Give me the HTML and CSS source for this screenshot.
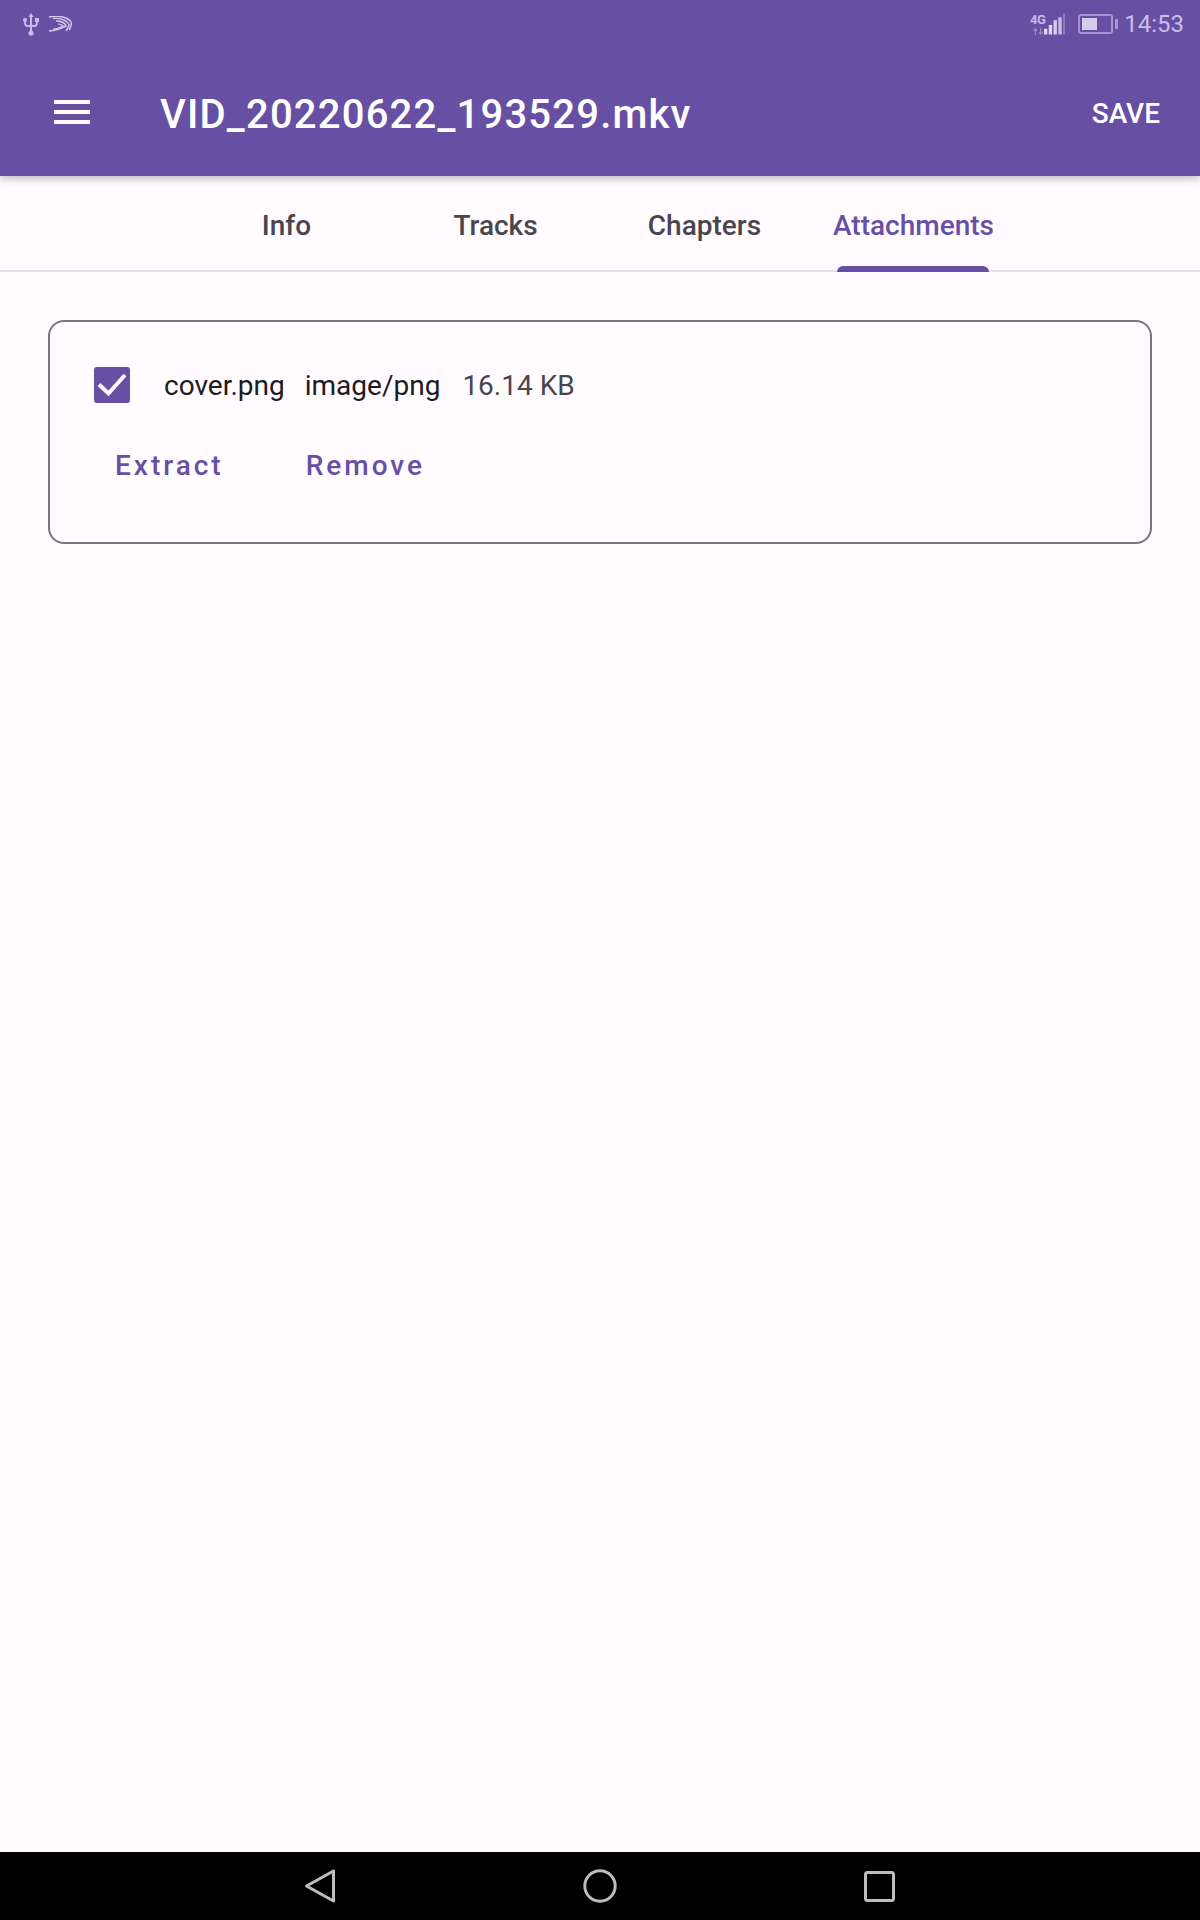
FILE: index.html
```html
<!DOCTYPE html>
<html lang="en">
<head>
  <meta charset="UTF-8">
  <title>VID_20220622_193529.mkv</title>
  <link rel="stylesheet" href="styles.css">
</head>
<body>
  <div class="screen">
    <header class="appbar">
      <div class="statusbar">
        <div class="status-left">
          <svg class="icon-usb" width="16" height="24" viewBox="0 0 16 24">
            <path d="M8 1 L10.5 5 H9 V20 H7 V5 H5.5 Z" fill="#c9bce8"/>
            <circle cx="8" cy="21" r="2.6" fill="#c9bce8"/>
            <path d="M2 8 V11 Q2 14 5 14 H11 Q14 14 14 11 V8" fill="none" stroke="#c9bce8" stroke-width="1.8"/>
            <circle cx="2" cy="8" r="2" fill="#c9bce8"/>
            <rect x="12" y="6" width="4" height="4" fill="#c9bce8"/>
          </svg>
          <svg class="icon-swift" width="24" height="16" viewBox="0 0 24 16">
            <path d="M1 1 C10 -1 21 1 23.5 7 C23.5 10 22.5 12 21 14" fill="none" stroke="#d6ccec" stroke-width="1.4"/>
            <path d="M5 2.5 C12 2 19 4 21 9 C20.5 11 19.5 13 18 15" fill="none" stroke="#d6ccec" stroke-width="1.4"/>
            <path d="M8 5 C13 5 17 7 18 10 C13 12.5 8 14.5 1 15" fill="none" stroke="#d6ccec" stroke-width="1.4"/>
            <path d="M10 8 C12 8 14 9 15 10 C11 12 8 13 5 13" fill="none" stroke="#d6ccec" stroke-width="1.2"/>
          </svg>
        </div>
        <div class="status-right">
          <div class="network">
            <span class="net-type">4G</span>
            <svg class="net-arrows" width="12" height="7" viewBox="0 0 12 8">
              <path d="M3 8 V1 M1 3 L3 1 L5 3 M9 0 V7 M7 5 L9 7 L11 5" fill="none" stroke="#9c8bc8" stroke-width="1.4"/>
            </svg>
          </div>
          <svg class="icon-signal" width="21" height="24" viewBox="0 0 22 24">
            <rect x="0" y="17" width="3.5" height="6" fill="#e0d8f2"/>
            <rect x="5" y="13" width="3.5" height="10" fill="#e0d8f2"/>
            <rect x="10" y="8" width="3.5" height="15" fill="#d6ccec"/>
            <rect x="15" y="5" width="3.5" height="18" fill="#c9bce8"/>
            <rect x="20" y="1" width="2" height="22" fill="#8f7dc0"/>
          </svg>
          <div class="battery">
            <div class="battery-body"><div class="battery-level"></div></div>
            <div class="battery-cap"></div>
          </div>
          <span class="clock">14:53</span>
        </div>
      </div>
      <div class="toolbar">
        <button class="menu-btn" aria-label="Menu"><span></span><span></span><span></span></button>
        <h1 class="title">VID_20220622_193529.mkv</h1>
        <button class="save-btn">SAVE</button>
      </div>
    </header>

    <nav class="tabs">
      <a class="tab">Info</a>
      <a class="tab">Tracks</a>
      <a class="tab">Chapters</a>
      <a class="tab active">Attachments</a>
    </nav>

    <main class="content">
      <section class="card">
        <div class="attachment">
          <span class="checkbox">
            <svg width="36" height="36" viewBox="0 0 36 36">
              <path d="M5 17.5 L14.5 26.5 L31 8" fill="none" stroke="#fffbfe" stroke-width="4"/>
            </svg>
          </span>
          <span class="file-name">cover.png</span>
          <span class="file-type">image/png</span>
          <span class="file-size">16.14 KB</span>
        </div>
        <div class="actions">
          <button class="text-btn">Extract</button>
          <button class="text-btn">Remove</button>
        </div>
      </section>
    </main>

    <footer class="navbar">
      <svg width="32" height="36" viewBox="0 0 32 36">
        <path d="M29.5 3 V33 L2.5 18 Z" fill="none" stroke="#bdbdbd" stroke-width="3" stroke-linejoin="round"/>
      </svg>
      <svg width="34" height="34" viewBox="0 0 34 34">
        <circle cx="17" cy="17" r="15.2" fill="none" stroke="#bdbdbd" stroke-width="3"/>
      </svg>
      <svg width="31" height="31" viewBox="0 0 31 31">
        <rect x="1.5" y="1.5" width="28" height="28" rx="2" fill="none" stroke="#bdbdbd" stroke-width="3"/>
      </svg>
    </footer>
  </div>
</body>
</html>
```

FILE: styles.css
```css
* {
  box-sizing: border-box;
}
body {
  margin: 0;
  font-family: Roboto, "Noto Sans", sans-serif;
  background-color: #fffbfe;
  color: #1c1b1f;
}
button {
  border: none;
  background: none;
  padding: 0;
  font-family: inherit;
  cursor: pointer;
}
.screen {
  display: flex;
  flex-direction: column;
  height: 1920px;
}

/* purple header: status bar + toolbar */
.appbar {
  height: 176px;
  background-color: #6750a4;
  box-shadow: 0 3px 8px rgba(0, 0, 0, 0.25);
  position: relative;
}
.statusbar {
  display: flex;
  justify-content: space-between;
  align-items: center;
  height: 48px;
  padding: 0 16px 0 23px;
}
.status-left {
  display: flex;
  align-items: center;
  gap: 9px;
}
.status-right {
  display: flex;
  align-items: center;
}
.network {
  display: flex;
  flex-direction: column;
  align-items: center;
  width: 13px;
  gap: 3px;
}
.net-type {
  font-size: 13px;
  font-weight: 700;
  line-height: 11px;
  letter-spacing: -0.5px;
  color: #c9bce8;
}
.battery {
  display: flex;
  align-items: center;
  margin-left: 13px;
}
.battery-body {
  width: 35px;
  height: 20px;
  padding: 2px;
  border: 2px solid #a595d2;
  border-radius: 3px;
}
.battery-level {
  width: 15px;
  height: 100%;
  background-color: #d6ccec;
}
.battery-cap {
  width: 3px;
  height: 10px;
  margin-left: 2px;
  background-color: #a595d2;
}
.clock {
  margin-left: 6px;
  font-size: 24px;
  color: #c9bce8;
}
.toolbar {
  display: flex;
  align-items: center;
  height: 128px;
  padding: 0 40px 0 54px;
}
.menu-btn {
  display: flex;
  flex-direction: column;
  gap: 6px;
  width: 36px;
}
.menu-btn span {
  display: block;
  height: 4px;
  background-color: #fff;
}
.title {
  flex: 1;
  margin: 0 0 0 70px;
  padding-top: 4px;
  font-size: 40px;
  font-weight: 500;
  letter-spacing: 1.2px;
  color: #fff;
}
.save-btn {
  padding-top: 2px;
  font-size: 28px;
  font-weight: 500;
  color: #fff;
}

/* tabs */
.tabs {
  display: flex;
  justify-content: center;
  height: 96px;
  border-bottom: 2px solid #e6e1e5;
}
.tab {
  position: relative;
  display: flex;
  justify-content: center;
  align-items: center;
  width: 209px;
  height: 96px;
  padding-top: 2px;
  font-size: 28px;
  font-weight: 500;
  color: #49454f;
}
.tab.active {
  color: #6750a4;
}
.tab.active::after {
  content: "";
  position: absolute;
  left: 28px;
  right: 29px;
  bottom: 0;
  height: 6px;
  background-color: #6750a4;
  border-radius: 6px 6px 0 0;
}

.content {
  flex: 1;
  padding: 48px 48px 0;
}
.card {
  height: 224px;
  padding: 45px 44px 0;
  border: 2px solid #79747e;
  border-radius: 16px;
}
.attachment {
  display: flex;
  align-items: center;
  font-size: 28px;
}
.checkbox {
  display: block;
  width: 36px;
  height: 36px;
  margin-right: 34px;
  background-color: #6750a4;
  border-radius: 3px;
}
.checkbox svg {
  display: block;
}
.file-name {
  margin-right: 20px;
}
.file-type {
  margin-right: 22px;
}
.file-size {
  color: #49454f;
}
.actions {
  display: flex;
  margin-top: 46px;
  padding-left: 21px;
  gap: 82px;
}
.text-btn {
  font-size: 28px;
  font-weight: 500;
  letter-spacing: 3px;
  color: #6750a4;
}

.navbar {
  display: flex;
  align-items: center;
  justify-content: space-between;
  height: 68px;
  padding: 0 305px 0 304px;
  background-color: #000;
}
```
